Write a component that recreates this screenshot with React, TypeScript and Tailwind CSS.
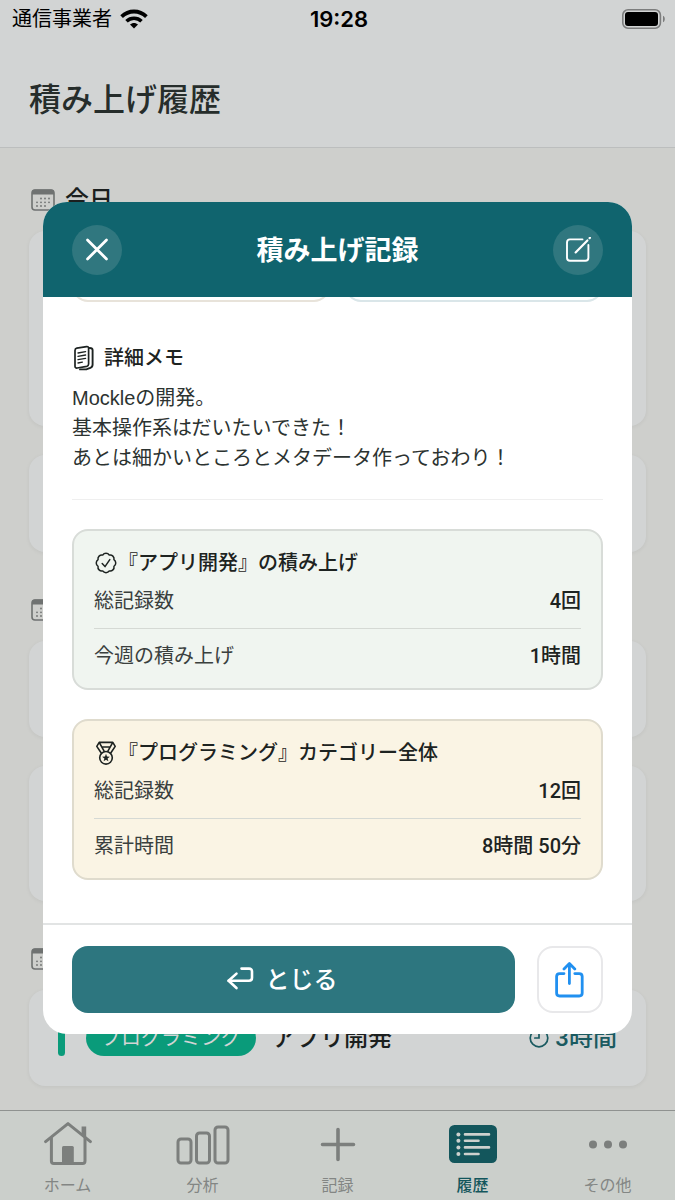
import type { ReactNode } from "react";

const jpFont = "font-['Liberation_Sans','Noto_Sans_CJK_JP',sans-serif]";
const numFont = "font-['Roboto','Noto_Sans_CJK_JP',sans-serif]";

type Stat = { label: string; value: string };

type Tab = { label: string; icon: ReactNode; active?: boolean };

function WifiIcon() {
  return (
    <svg width="28" height="20" viewBox="0 0 28 20" fill="none" aria-hidden="true">
      <path d="M1.6 7.6C8.6 0.8 19.4 0.8 26.4 7.6" stroke="#000" strokeWidth="3.8" />
      <path d="M6.5 12.2C10.7 8.2 17.3 8.2 21.5 12.2" stroke="#000" strokeWidth="3.6" />
      <path d="M14 19.6L10 15.6C12.2 13.4 15.8 13.4 18 15.6Z" fill="#000" />
    </svg>
  );
}

function BatteryIcon() {
  return (
    <svg width="44" height="20" viewBox="0 0 44 20" fill="none" aria-hidden="true">
      <rect x="0.8" y="0.8" width="37.6" height="18.4" rx="5.2" stroke="#7c7d7d" strokeWidth="1.6" />
      <rect x="3" y="3" width="33" height="14" rx="3" fill="#000" />
      <path d="M41 6.8C43.4 7.6 43.4 12.4 41 13.2Z" fill="#7c7d7d" />
    </svg>
  );
}

function CalendarIcon() {
  return (
    <svg width="24" height="24" viewBox="0 0 24 24" fill="none" className="shrink-0" aria-hidden="true">
      <rect x="1" y="2" width="22" height="20" rx="3" stroke="#6f7271" strokeWidth="1.6" />
      <path d="M1 4.5A3 3 0 0 1 4 1.5H20A3 3 0 0 1 23 4.5V6.5H1Z" fill="#6f7271" />
      <g fill="#6f7271">
        <circle cx="10" cy="10.5" r="0.9" />
        <circle cx="14" cy="10.5" r="0.9" />
        <circle cx="18" cy="10.5" r="0.9" />
        <circle cx="6" cy="14.3" r="0.9" />
        <circle cx="10" cy="14.3" r="0.9" />
        <circle cx="14" cy="14.3" r="0.9" />
        <circle cx="18" cy="14.3" r="0.9" />
        <circle cx="6" cy="18" r="0.9" />
        <circle cx="10" cy="18" r="0.9" />
        <circle cx="14" cy="18" r="0.9" />
      </g>
    </svg>
  );
}

function MemoIcon() {
  return (
    <svg width="22" height="26" viewBox="0 0 22 26" fill="none" stroke="#1d2321" strokeLinecap="round" strokeLinejoin="round" aria-hidden="true">
      <path d="M4.8 3.2L14.6 1.7Q16.6 1.4 16.6 3.3V19Q16.6 20.9 14.8 21.3L5.2 23Q3 23.3 3 21.2V5.4Q3 3.5 4.8 3.2Z" strokeWidth="1.7" />
      <path d="M17.6 3Q20.6 3 20.6 5V19.5Q20.6 22 18.4 22.8L14.8 24.2L8 24.4" strokeWidth="1.9" />
      <path d="M6 8L13.6 6.7M6 11.3L13.6 10M6 14.6L13.6 13.3M6 18L10.4 17.2" strokeWidth="1.3" />
    </svg>
  );
}

function SealIcon() {
  return (
    <svg width="24" height="24" viewBox="0 0 24 24" fill="none" stroke="#1d2321" strokeWidth="1.5" strokeLinecap="round" strokeLinejoin="round" aria-hidden="true">
      <path d="M19.95 8.71A3.9 3.9 0 0 1 19.95 15.29A3.9 3.9 0 0 1 15.29 19.95A3.9 3.9 0 0 1 8.71 19.95A3.9 3.9 0 0 1 4.05 15.29A3.9 3.9 0 0 1 4.05 8.71A3.9 3.9 0 0 1 8.71 4.05A3.9 3.9 0 0 1 15.29 4.05A3.9 3.9 0 0 1 19.95 8.71Z" />
      <path d="M8.2 12.6L11 15.6L15.8 8.6" />
    </svg>
  );
}

function MedalIcon() {
  return (
    <svg width="24" height="24" viewBox="0 0 24 24" fill="none" stroke="#1d2321" strokeWidth="1.6" strokeLinejoin="round" aria-hidden="true">
      <path d="M5.2 1.4H18.8L21.2 5.4L16.6 12.2M7.4 12.2L2.8 5.4L5.2 1.4L10.4 10.6M18.8 1.4L13.6 10.6M7.8 6H16.2" />
      <circle cx="12" cy="16.8" r="6.3" />
      <path d="M12 12.8L13 15.6L15.9 15.7L13.6 17.5L14.4 20.3L12 18.7L9.6 20.3L10.4 17.5L8.1 15.7L11 15.6Z" fill="#1d2321" stroke="none" />
    </svg>
  );
}

function ClockIcon() {
  return (
    <svg width="20" height="20" viewBox="0 0 20 20" fill="none" stroke="#1a5a60" strokeWidth="1.7" strokeLinecap="round" aria-hidden="true">
      <circle cx="10" cy="10" r="8.8" />
      <path d="M10 4.5V10H5.8" />
    </svg>
  );
}

function SectionTitle({ children }: { children?: ReactNode }) {
  return (
    <h2 className="mb-[13px] flex h-9 items-center gap-2.5 pl-0.5 text-2xl font-medium text-[#1b1f1e]">
      <CalendarIcon />
      {children}
    </h2>
  );
}

function RecordCard({ className, children }: { className: string; children?: ReactNode }) {
  return (
    <div className={`rounded-2xl bg-[#d2d4d4] shadow-[0_1px_4px_rgba(0,0,0,0.06)] ${className}`}>
      {children}
    </div>
  );
}

function StatCard({ icon, title, stats, className }: { icon: ReactNode; title: string; stats: Stat[]; className: string }) {
  return (
    <section className={`rounded-2xl border-2 px-5 py-[17px] text-xl leading-[30px] ${className}`}>
      <h3 className="mb-2 flex items-center font-medium text-[#1d2321]">
        <span className="flex w-6 shrink-0 justify-center">{icon}</span>
        {title}
      </h3>
      <dl className="divide-y divide-[#d5d9d4]">
        {stats.map((stat, i) => (
          <div key={stat.label} className={`flex justify-between ${i === 0 ? "pb-3" : "pt-3"}`}>
            <dt className="text-[#3a403e]">{stat.label}</dt>
            <dd className={`font-medium text-[#1d2321] ${numFont}`}>{stat.value}</dd>
          </div>
        ))}
      </dl>
    </section>
  );
}

const tabs: Tab[] = [
  {
    label: "ホーム",
    icon: (
      <svg width="48" height="48" viewBox="0 0 48 48" fill="none" stroke="#7c7f7d" strokeWidth="3" strokeLinecap="round" strokeLinejoin="round" aria-hidden="true">
        <path d="M1.6 21.6L24 3.6L46.4 21.6" />
        <path d="M7.4 18V41Q7.4 43.4 9.8 43.4H38.6Q41 43.4 41 41V18" />
        <path d="M37.6 6.4H42.2V18L37.6 14Z" fill="#7c7f7d" stroke="none" />
        <path d="M18 27.5Q18 26 19.5 26H28.3Q29.8 26 29.8 27.5V44H18Z" fill="#7c7f7d" stroke="none" />
      </svg>
    ),
  },
  {
    label: "分析",
    icon: (
      <svg width="54" height="48" viewBox="0 0 54 48" fill="none" stroke="#7c7f7d" strokeWidth="3" aria-hidden="true">
        <rect x="2" y="19" width="13" height="24" rx="3" />
        <rect x="20.5" y="13" width="13" height="30" rx="3" />
        <rect x="39" y="7" width="13" height="36" rx="3" />
      </svg>
    ),
  },
  {
    label: "記録",
    icon: (
      <svg width="48" height="48" viewBox="0 0 48 48" stroke="#7c7f7d" strokeWidth="3.6" strokeLinecap="round" aria-hidden="true">
        <path d="M24 9.5V39.5M8.5 24.5H39.5" />
      </svg>
    ),
  },
  {
    label: "履歴",
    active: true,
    icon: (
      <svg width="48" height="48" viewBox="0 0 48 48" aria-hidden="true">
        <rect x="0" y="5" width="48" height="38" rx="5.5" fill="#13565c" />
        <g fill="#cdd1ce">
          <circle cx="9.4" cy="14.4" r="2" />
          <circle cx="9.4" cy="20.8" r="2" />
          <circle cx="9.4" cy="27.4" r="2" />
          <circle cx="9.4" cy="34" r="2" />
        </g>
        <path d="M16 14.4H40M16 20.8H29.5M16 27.4H40M16 34H29.5" stroke="#cdd1ce" strokeWidth="2.6" strokeLinecap="round" />
      </svg>
    ),
  },
  {
    label: "その他",
    icon: (
      <svg width="48" height="48" viewBox="0 0 48 48" fill="#7c7f7d" aria-hidden="true">
        <circle cx="9" cy="24.6" r="4" />
        <circle cx="24" cy="24.6" r="4" />
        <circle cx="39" cy="24.6" r="4" />
      </svg>
    ),
  },
];

export default function App() {
  return (
    <div className={`flex h-screen flex-col overflow-hidden bg-[#cecfcc] ${jpFont}`}>
      {/* Header */}
      <header className="border-b border-[#bcbebe] bg-[#d2d4d4]">
        <div className="grid h-[38px] grid-cols-3 items-center pr-[9px] pl-3 text-black">
          <div className="flex items-center gap-2 text-xl">
            通信事業者
            <WifiIcon />
          </div>
          <time className="text-center font-['Inter',sans-serif] text-[22px] font-semibold">19:28</time>
          <div className="flex justify-end">
            <BatteryIcon />
          </div>
        </div>
        <h1 className="px-[29px] pt-[38px] pb-[23px] text-[32px] leading-[48px] font-medium text-[#262d2b]">積み上げ履歴</h1>
      </header>

      {/* History list */}
      <main className="min-h-0 flex-1 overflow-hidden px-[29px] pt-[34px]">
        <section className="mb-10">
          <SectionTitle>今日</SectionTitle>
          <div className="flex flex-col gap-[29px]">
            <RecordCard className="h-[195px]" />
            <RecordCard className="h-[97px]" />
          </div>
        </section>
        <section className="mb-10">
          <SectionTitle />
          <div className="flex flex-col gap-[29px]">
            <RecordCard className="h-24" />
            <RecordCard className="h-[135px]" />
          </div>
        </section>
        <section>
          <SectionTitle />
          <RecordCard className="flex h-24 items-center px-[29px]">
            <span className="mr-[21px] h-9 w-[7px] rounded-full bg-[#0a9b7a]" />
            <span className="mr-4 flex h-9 items-center rounded-full bg-[#0a9b7a] px-[15px] text-xl text-[#d2d4d4]">プログラミング</span>
            <span className="text-2xl font-medium text-[#1b1f1e]">アプリ開発</span>
            <span className={`ml-auto flex items-center gap-1.5 text-2xl font-medium text-[#1a5a60] ${numFont}`}>
              <ClockIcon />
              3時間
            </span>
          </RecordCard>
        </section>
      </main>

      {/* Tab bar */}
      <nav className="grid grid-cols-5 border-t border-[#8f9290] bg-[#cbcfcb] pt-[9px] pb-1">
        {tabs.map((tab) => (
          <button
            key={tab.label}
            type="button"
            className={`flex flex-col items-center gap-2 text-base leading-5 ${
              tab.active ? "font-medium text-[#13565c]" : "text-[#838684]"
            }`}
          >
            {tab.icon}
            {tab.label}
          </button>
        ))}
      </nav>

      {/* Record modal */}
      <div className="fixed inset-0 z-10 flex items-center justify-center px-[43px] pt-9">
        <div role="dialog" aria-labelledby="record-title" className="w-full overflow-hidden rounded-3xl bg-white">
          <div className="flex h-[95px] items-center justify-between bg-[#10646e] px-[29px] text-white">
            <button type="button" aria-label="閉じる" className="flex size-[50px] items-center justify-center rounded-full bg-[#30777f]">
              <svg width="24" height="24" viewBox="0 0 24 24" stroke="currentColor" strokeWidth="2.8" strokeLinecap="round" aria-hidden="true">
                <path d="M2.5 2L21.5 21M21.5 2L2.5 21" />
              </svg>
            </button>
            <h2 id="record-title" className="pt-1 text-[27px] font-bold">積み上げ記録</h2>
            <button type="button" aria-label="編集" className="flex size-[50px] items-center justify-center rounded-full bg-[#30777f]">
              <svg width="26" height="26" viewBox="0 0 26 26" fill="none" stroke="currentColor" strokeWidth="1.9" strokeLinecap="round" aria-hidden="true">
                <path d="M17.5 2.4H5Q2 2.4 2 5.4V20.8Q2 23.8 5 23.8H20.4Q23.4 23.8 23.4 20.8V8" />
                <path d="M10.6 15.4L22.4 3.4" strokeWidth="2.2" />
                <path d="M24.6 1.1L25 0.7" strokeWidth="2.2" />
              </svg>
            </button>
          </div>

          <div className="px-[29px] pb-[43px] text-xl leading-[30px]">
            {/* The upper cards are scrolled away under the header */}
            <div className="mb-[41px] grid h-[5px] grid-cols-2 content-end gap-[15px] overflow-hidden">
              <div className="h-16 rounded-2xl border-2 border-[#e8e3da]" />
              <div className="h-16 rounded-2xl border-2 border-[#dae6e9]" />
            </div>

            <h3 className="mb-2.5 flex items-center gap-2.5 font-medium text-[#1d2321]">
              <MemoIcon />
              詳細メモ
            </h3>
            <p className="text-[#2c3331]">
              Mockleの開発。
              <br />
              基本操作系はだいたいできた！
              <br />
              あとは細かいところとメタデータ作っておわり！
            </p>

            <hr className="mt-[26px] mb-[29px] border-[#efefef]" />

            <div className="flex flex-col gap-[29px]">
              <StatCard
                className="border-[#d8dcd8] bg-[#f0f5f0]"
                icon={<SealIcon />}
                title="『アプリ開発』の積み上げ"
                stats={[
                  { label: "総記録数", value: "4回" },
                  { label: "今週の積み上げ", value: "1時間" },
                ]}
              />
              <StatCard
                className="border-[#dfdbcd] bg-[#faf4e4]"
                icon={<MedalIcon />}
                title="『プログラミング』カテゴリー全体"
                stats={[
                  { label: "総記録数", value: "12回" },
                  { label: "累計時間", value: "8時間 50分" },
                ]}
              />
            </div>
          </div>

          <div className="flex gap-[22px] border-t-2 border-[#e2e4e4] px-[29px] py-[21px]">
            <button type="button" className="flex h-[67px] flex-1 items-center justify-center gap-3 rounded-2xl bg-[#2d767f] pr-6 text-2xl font-medium text-white">
              <svg width="28" height="26" viewBox="0 0 28 26" fill="none" stroke="currentColor" strokeWidth="2.6" strokeLinecap="round" strokeLinejoin="round" aria-hidden="true">
                <path d="M10.5 6.6L2.6 13.8L10.5 21" />
                <path d="M2.6 13.8H23Q26 13.8 26 10.8V4.6Q26 1.6 23 1.6H15.5" />
              </svg>
              とじる
            </button>
            <button type="button" aria-label="共有" className="flex h-[67px] w-[66px] items-center justify-center rounded-2xl border-2 border-[#e8e8ea] bg-white">
              <svg width="30" height="36" viewBox="0 0 30 36" fill="none" stroke="#2190f0" strokeWidth="2.8" strokeLinecap="round" strokeLinejoin="round" aria-hidden="true">
                <path d="M9 11.6H4.6Q1.6 11.6 1.6 14.6V31Q1.6 34 4.6 34H24.2Q27.2 34 27.2 31V14.6Q27.2 11.6 24.2 11.6H19.8" />
                <path d="M14.4 21.6V2M9 7L14.4 1.6L19.8 7" />
              </svg>
            </button>
          </div>
        </div>
      </div>
    </div>
  );
}
